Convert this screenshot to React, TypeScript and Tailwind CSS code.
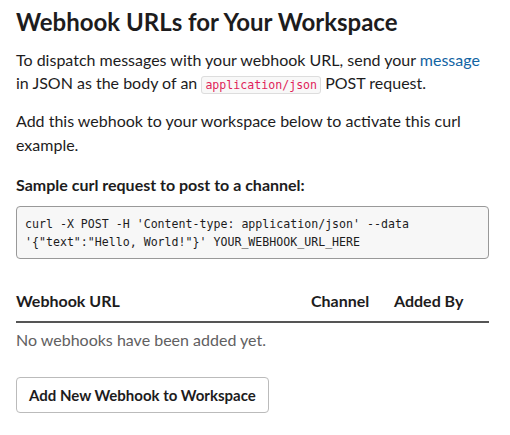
import React from "react";

export default function App() {
  return (
    <div className="w-[510px] h-[435px] bg-white pl-4 pr-[21px] text-[#1d1c1d]" style={{ fontFamily: "Lato, 'Noto Sans', sans-serif" }}>
      <h1 className="pt-[7px] text-[24px] font-bold leading-[30px]">Webhook URLs for Your Workspace</h1>
      <p className="mt-[11px] text-[16px] leading-[23px]">
        To dispatch messages with your webhook URL, send your{" "}
        <span className="text-[#1264a3]">message</span> in JSON as the body of an{" "}
        <code className="rounded-[3px] border border-[#dddddd] bg-[#f8f8f8] px-[3px] py-[1px] text-[11.6px] text-[#e01e5a]" style={{ fontFamily: "'DejaVu Sans Mono', monospace" }}>application/json</code> POST request.
      </p>
      <p className="mt-[12px] text-[16px] leading-[24px]">Add this webhook to your workspace below to activate this curl example.</p>
      <p className="mt-[16px] text-[16px] font-bold leading-[24px]">Sample curl request to post to a channel:</p>
      <pre className="mt-[9px] rounded-[4px] border border-[#999999] bg-[#f7f7f7] px-[8px] pt-[8px] pb-[7px] text-[11.6px] leading-[18px] whitespace-pre-wrap" style={{ fontFamily: "'DejaVu Sans Mono', monospace" }}>
{`curl -X POST -H 'Content-type: application/json' --data
'{"text":"Hello, World!"}' YOUR_WEBHOOK_URL_HERE`}
      </pre>
      <div className="mt-[30px] flex border-b-2 border-[#555555] pb-[8px] text-[16px] font-bold leading-[24px]">
        <div className="flex-1">Webhook URL</div>
        <div className="w-[83px]">Channel</div>
        <div className="w-[95px]">Added By</div>
      </div>
      <p className="mt-[5px] text-[16px] leading-[24px] text-[#616061]">No webhooks have been added yet.</p>
      <button className="mt-[25px] h-[36px] rounded-[4px] border border-[#bbbbbb] bg-white px-[12px] text-[15px] font-bold">Add New Webhook to Workspace</button>
    </div>
  );
}
